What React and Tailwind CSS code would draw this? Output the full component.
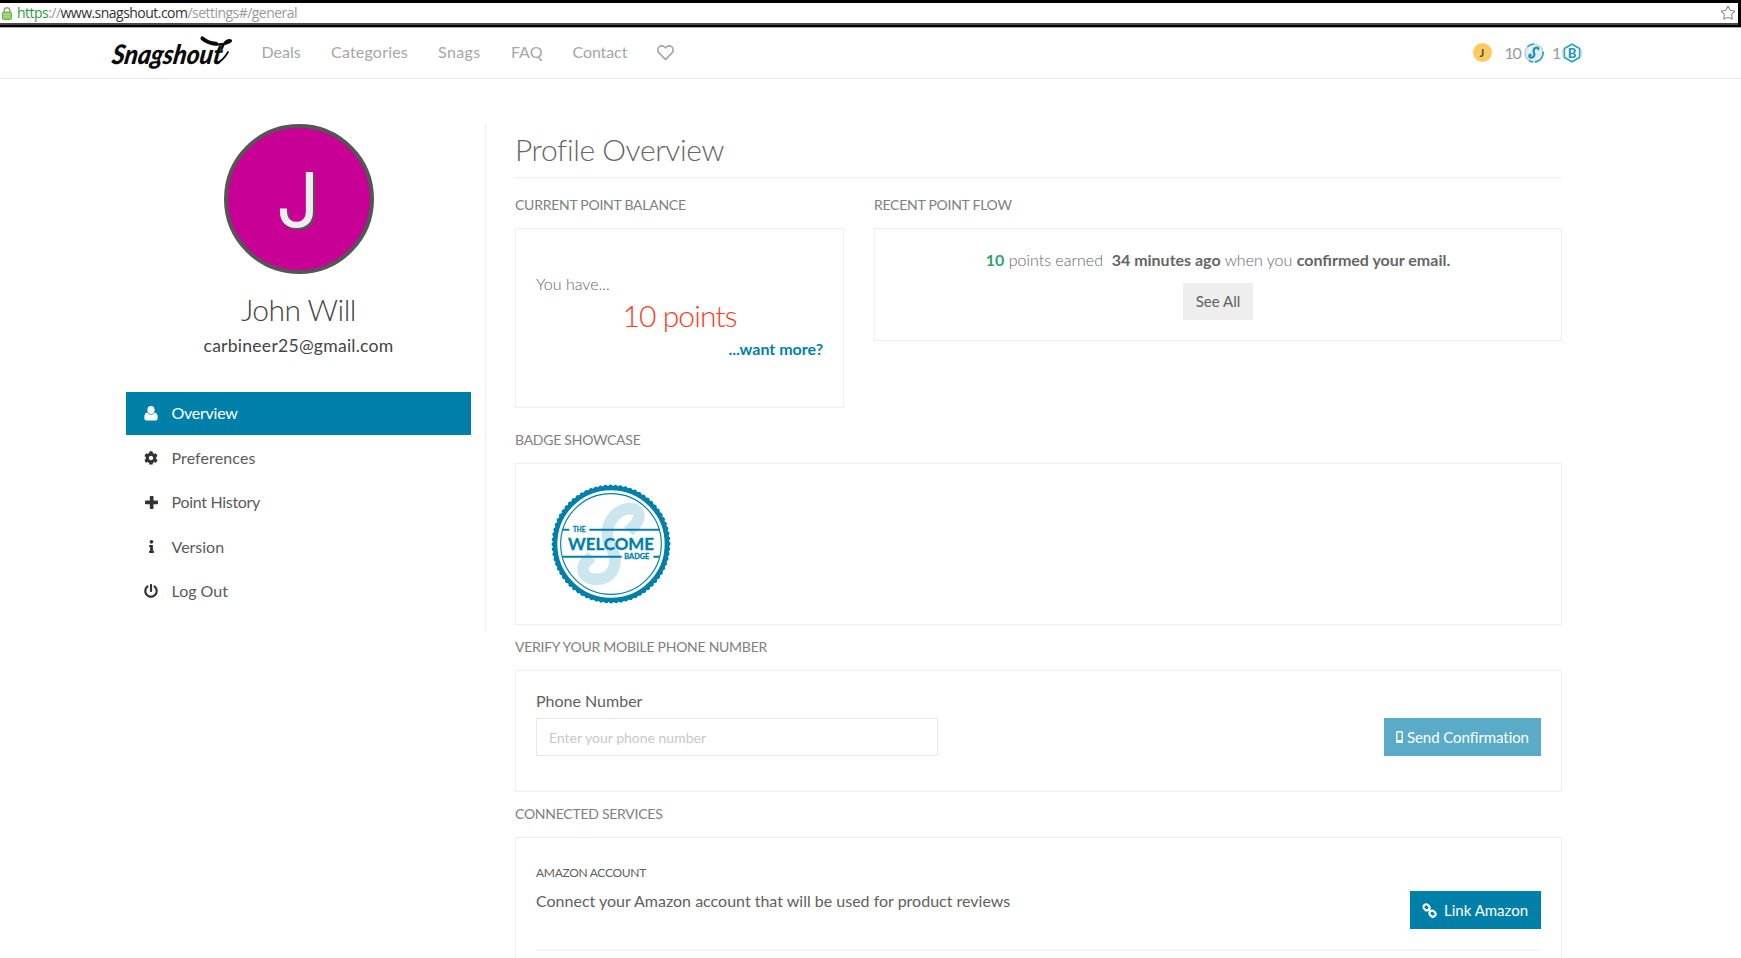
import { FaCog, FaInfo, FaPowerOff, FaRegHeart } from "react-icons/fa";
import { Star } from "lucide-react";

function UserIcon() {
  return (
    <svg width="14" height="15" viewBox="0 0 14 15" fill="currentColor">
      <ellipse cx="7" cy="4" rx="3.6" ry="4" />
      <path d="M3.4 6.6C1.2 7 .3 8.600 .3 11.700c0 1.900 1 2.800 2.600 2.800h8.200c1.600 0 2.600-.9 2.600-2.800 0-3.100-.9-4.700-3.100-5.100C9.800 8 8.400 8.800 7 8.800S4.200 8 3.400 6.600z" />
    </svg>
  );
}

function PlusIcon() {
  return (
    <svg width="13" height="13" viewBox="0 0 13 13" fill="currentColor">
      <rect x="4.800" y="0" width="3.700" height="13" rx="0.800" />
      <rect x="0" y="4.600" width="13" height="3.700" rx="0.800" />
    </svg>
  );
}

function LinkIcon() {
  return (
    <svg width="15" height="15" viewBox="0 0 15 15" fill="none" stroke="currentColor" strokeWidth="2.100">
      <rect x="1.400" y="1.700" width="6.200" height="5.200" rx="2.400" transform="rotate(45 4.500 4.300)" />
      <rect x="7.400" y="8.100" width="6.200" height="5.200" rx="2.400" transform="rotate(45 10.500 10.700)" />
      <path d="M6 6l3 3" strokeWidth="1.800" />
    </svg>
  );
}

function LockIcon() {
  return (
    <svg width="10" height="13" viewBox="0 0 10 13">
      <path d="M2.200 6V3.600a2.800 2.800 0 0 1 5.600 0V6" fill="none" stroke="#9a9a9a" strokeWidth="1.600" />
      <rect x="0.500" y="5" width="9" height="7.500" rx="1" fill="#8fd16a" stroke="#67b044" />
      <path d="M1.500 7.500h7M1.500 9.500h7" stroke="#a9e085" strokeWidth="0.800" />
    </svg>
  );
}

function Logo() {
  return (
    <svg width="122" height="40" viewBox="0 0 122 40" className="overflow-visible">
      <text
        x="0"
        y="0"
        textLength="110"
        lengthAdjust="spacingAndGlyphs"
        transform="translate(0 30.500) skewX(-9)"
        className="font-['Lato'] text-[27px] font-black italic"
        fill="#0a0a0a"
      >
        Snagshout
      </text>
      <path d="M91.500 5.500c3.500 3 8 5 13.500 5.200" fill="none" stroke="#0a0a0a" strokeWidth="4" strokeLinecap="round" />
      <path d="M91 4.500c6 6 15 8 22 6.500 6-1.300 8.500-3.500 5.800-3.700-3.800-.2-6.500 4-8.300 8.700" fill="none" stroke="#0a0a0a" strokeWidth="2.400" strokeLinecap="round" />
      <path d="M107 29.500c4-2 7.500-6 10-10.500" fill="none" stroke="#0a0a0a" strokeWidth="1.800" strokeLinecap="round" />
    </svg>
  );
}

function PointsCoin() {
  return (
    <svg width="20" height="20" viewBox="0 0 20 20">
      <circle cx="10" cy="10" r="9" fill="#e6edf0" stroke="#b3c6cd" strokeWidth="1.200" />
      <path d="M3.500 3.800A9 9 0 0 1 10 1M19 8.500a9 9 0 0 1-8 10.400M5 17.300a9 9 0 0 0 4 1.700" fill="none" stroke="#2ba3c4" strokeWidth="1.600" />
      <path d="M14.300 6.200c.8-2.300-3.800-2.400-4.600.8-.7 2.600 1.300 3.200.5 5.600-.8 2.500-4.800 2.700-4.900.5 0-1 .8-1.500 1.500-1.300" fill="none" stroke="#1b97bc" strokeWidth="2.300" strokeLinecap="round" />
    </svg>
  );
}

function BadgeCoin() {
  return (
    <svg width="20" height="20" viewBox="0 0 20 20">
      <path d="M10 1.200l7.600 4.400v8.800L10 18.800l-7.600-4.400V5.600z" fill="#fff" stroke="#2ba3c4" strokeWidth="1.700" />
      <path d="M.9 6.500v7M19.100 6.500v7" stroke="#8fcfe0" strokeWidth="1" />
      <text x="10" y="14.600" textAnchor="middle" className="font-['Lato'] text-[13px] font-black" fill="#1b97bc">
        B
      </text>
    </svg>
  );
}

function WelcomeBadge() {
  return (
    <svg width="120" height="120" viewBox="153 190 360 360">
      <circle cx="333" cy="370" r="168" fill="#fff" stroke="#0080a8" strokeWidth="14" />
      <circle cx="333" cy="370" r="172.500" fill="none" stroke="#0080a8" strokeWidth="12" strokeLinecap="round" strokeDasharray="0.1 14.900" />
      <circle cx="333" cy="370" r="151" fill="none" stroke="#0080a8" strokeWidth="3.500" />
      <path
        d="M386 332C398 318 417 308 417 284C417 271 406 264 392 264C350 264 322 302 322 340C322 378 345 385 345 420C344 458 320 476 288 476C262 476 249 462 249 444C249 428 262 418 276 408"
        fill="none"
        stroke="#cce6ee"
        strokeWidth="35"
      />
      <path d="M188 327h20M268 327h212M188 408h177M460 408h18" stroke="#0080a8" strokeWidth="6" />
      <g fill="#0080a8" className="font-['Lato'] font-bold">
        <text x="219" y="333" textLength="37" lengthAdjust="spacingAndGlyphs" className="text-[20px]" stroke="#0080a8" strokeWidth="0.800">THE</text>
        <text x="204" y="387" textLength="258" lengthAdjust="spacingAndGlyphs" className="text-[53px]" stroke="#0080a8" strokeWidth="1">WELCOME</text>
        <text x="373" y="415" textLength="75" lengthAdjust="spacingAndGlyphs" className="text-[20px]" stroke="#0080a8" strokeWidth="0.800">BADGE</text>
      </g>
    </svg>
  );
}

function NavItem({ icon, active, children }) {
  return (
    <li
      className={
        active
          ? "flex h-[42.5px] items-center bg-[#0080a8] pl-[15.500px] text-white"
          : "mt-[2px] flex h-[42.5px] items-center pl-[15.500px] text-[#5a5a5a]"
      }
    >
      <span className={active ? "mr-[11px] flex w-[19px] justify-center" : "mr-[11px] flex w-[19px] justify-center text-[#333]"}>{icon}</span>
      {children}
    </li>
  );
}

function SectionLabel({ children }) {
  return <h3 className="mb-[13px] text-sm leading-5 tracking-[-0.26px] text-[#808080] uppercase">{children}</h3>;
}

export default function App() {
  return (
    <div className="h-[958px] overflow-hidden bg-white font-['Lato',sans-serif] text-base leading-6 text-[#606060]">
      <div className="h-7 border-b border-[#aaa] bg-black pt-[3px] pr-[3px]">
        <div className="flex h-[22px] items-center justify-between border-b-2 border-[#4a4a4a] bg-white pr-[2px] pl-[2px]">
          <div className="flex items-center">
            <LockIcon />
            <span className="ml-[5px] font-['Open_Sans',sans-serif] text-sm leading-5 tracking-[-0.53px] text-[#999]">
              <span className="text-[#2f9a3c]">https</span>://<span className="text-[#333]">www.snagshout.com</span>/settings#/general
            </span>
          </div>
          <Star size={16} strokeWidth={1.600} color="#8a8a8a" />
        </div>
      </div>

      <header className="flex h-[51px] items-center border-b border-[#e8e8e8] pl-[111px] text-[#a6a6a6]">
        <div className="flex h-[40px] w-[150.500px] items-center">
          <Logo />
        </div>
        <nav className="flex flex-1 items-center pb-[2px]">
          <span className="w-[69.500px]">Deals</span>
          <span className="w-[107px] tracking-[0.2px]">Categories</span>
          <span className="w-[73px] tracking-[0.4px]">Snags</span>
          <span className="w-[61.500px]">FAQ</span>
          <span className="w-[84px] tracking-[-0.1px]">Contact</span>
          <FaRegHeart size={17} />
        </nav>
        <div className="flex w-[268.500px] items-center pb-px">
          <span className="flex size-[19px] items-center justify-center rounded-full bg-[#ffcb60] text-[11px] font-black text-[#555]">J</span>
          <span className="ml-[13px] w-[19.500px] text-base tracking-[-1.300px] text-[#999]">10</span>
          <PointsCoin />
          <span className="ml-2 w-[10px] text-base text-[#999]">1</span>
          <BadgeCoin />
        </div>
      </header>

      <main className="flex items-start pt-[45px] pl-[126px]">
        <aside className="h-[508px] w-[360px] border-r border-[#eee] pr-[14px]">
          <div className="mx-auto flex size-[150px] items-center justify-center rounded-full border-4 border-[#555] bg-[#c90096]">
            <span className="pr-px font-['Inter'] text-[76px] leading-[78px] text-[#eee] [text-shadow:2px_2px_1px_#555]">J</span>
          </div>
          <h2 className="mt-[17px] text-center text-[30px] leading-9 font-light tracking-[-0.5px] text-[#444]">John Will</h2>
          <p className="mt-[6px] text-center text-[17.600px] leading-[26px] tracking-[0.23px] text-[#444]">carbineer25@gmail.com</p>
          <ul className="mt-[33px]">
            <NavItem active icon={<UserIcon />}>
              <span className="tracking-[-0.25px]">Overview</span>
            </NavItem>
            <NavItem icon={<FaCog size={14} />}>
              <span className="tracking-[0.1px]">Preferences</span>
            </NavItem>
            <NavItem icon={<PlusIcon />}>
              <span className="tracking-[-0.3px]">Point History</span>
            </NavItem>
            <NavItem icon={<FaInfo size={13} />}>Version</NavItem>
            <NavItem icon={<FaPowerOff size={14} />}>Log Out</NavItem>
          </ul>
        </aside>

        <section className="ml-[29px] w-[1047px]">
          <h1 className="h-[54px] border-b border-[#eee] pt-[7px] text-[30px] leading-9 font-light tracking-[-0.4px] text-[#666]">
            Profile Overview
          </h1>

          <div className="mt-[17px] mb-[22px] flex items-start gap-[30px]">
            <div className="w-[329px]">
              <SectionLabel>Current Point Balance</SectionLabel>
              <div className="h-[180px] border border-[#eee] px-5 pt-[43px]">
                <p className="font-light text-[#666]">You have...</p>
                <p className="mt-px text-center text-[30px] leading-9 font-light tracking-[-0.9px] text-[#ff3a1d]">10 points</p>
                <p className="mt-1 text-right font-bold text-[#0080a8]">...want more?</p>
              </div>
            </div>
            <div className="flex-1">
              <SectionLabel>Recent Point Flow</SectionLabel>
              <div className="flex h-[113px] flex-col items-center border border-[#eee] pt-[18.500px]">
                <p className="font-light text-[#666]">
                  <b className="font-bold text-[#2fa36b]">10</b> points earned&nbsp; <b className="font-bold">34 minutes ago</b> when you{" "}
                  <b className="font-bold">confirmed your email.</b>
                </p>
                <button className="mt-[11px] h-[37px] w-[70px] bg-[#eee] text-[15px]">See All</button>
              </div>
            </div>
          </div>

          <SectionLabel>Badge Showcase</SectionLabel>
          <div className="mb-3 h-[162px] border border-[#eee] pt-5 pl-[35px]">
            <WelcomeBadge />
          </div>

          <SectionLabel>Verify Your Mobile Phone Number</SectionLabel>
          <div className="mb-3 flex h-[122px] items-start justify-between border border-[#eee] px-5 pt-[18px]">
            <div>
              <label className="block">Phone Number</label>
              <input
                placeholder="Enter your phone number"
                className="mt-[5px] block h-[38px] w-[402px] border border-[#e8e8e8] px-3 text-sm placeholder:text-[#c8c8c8]"
              />
            </div>
            <button className="mt-[29px] flex h-[38px] w-[157px] items-center gap-1 bg-[#5aabc7] pl-3 text-[15px] tracking-[-0.07px] text-white">
              <svg width="7" height="12" viewBox="0 0 7 12" fill="none" stroke="currentColor">
                <rect x="0.700" y="0.700" width="5.600" height="10.600" rx="0.800" strokeWidth="1.400" />
                <path d="M.7 10h5.600" strokeWidth="1.800" />
              </svg>
              Send Confirmation
            </button>
          </div>

          <SectionLabel>Connected Services</SectionLabel>
          <div className="h-[200px] border border-[#eee] px-5 pt-[26px]">
            <div className="flex h-[87px] items-start justify-between border-b-2 border-[#f6f6f6]">
              <div>
                <h4 className="text-xs leading-[18px] tracking-[-0.3px]">AMAZON ACCOUNT</h4>
                <p className="mt-[7px]">Connect your Amazon account that will be used for product reviews</p>
              </div>
              <button className="mt-[27px] flex h-[38px] w-[131px] items-center gap-[7px] bg-[#0080a8] pl-3 text-[15px] text-white">
                <LinkIcon />
                Link Amazon
              </button>
            </div>
          </div>
        </section>
      </main>
    </div>
  );
}
